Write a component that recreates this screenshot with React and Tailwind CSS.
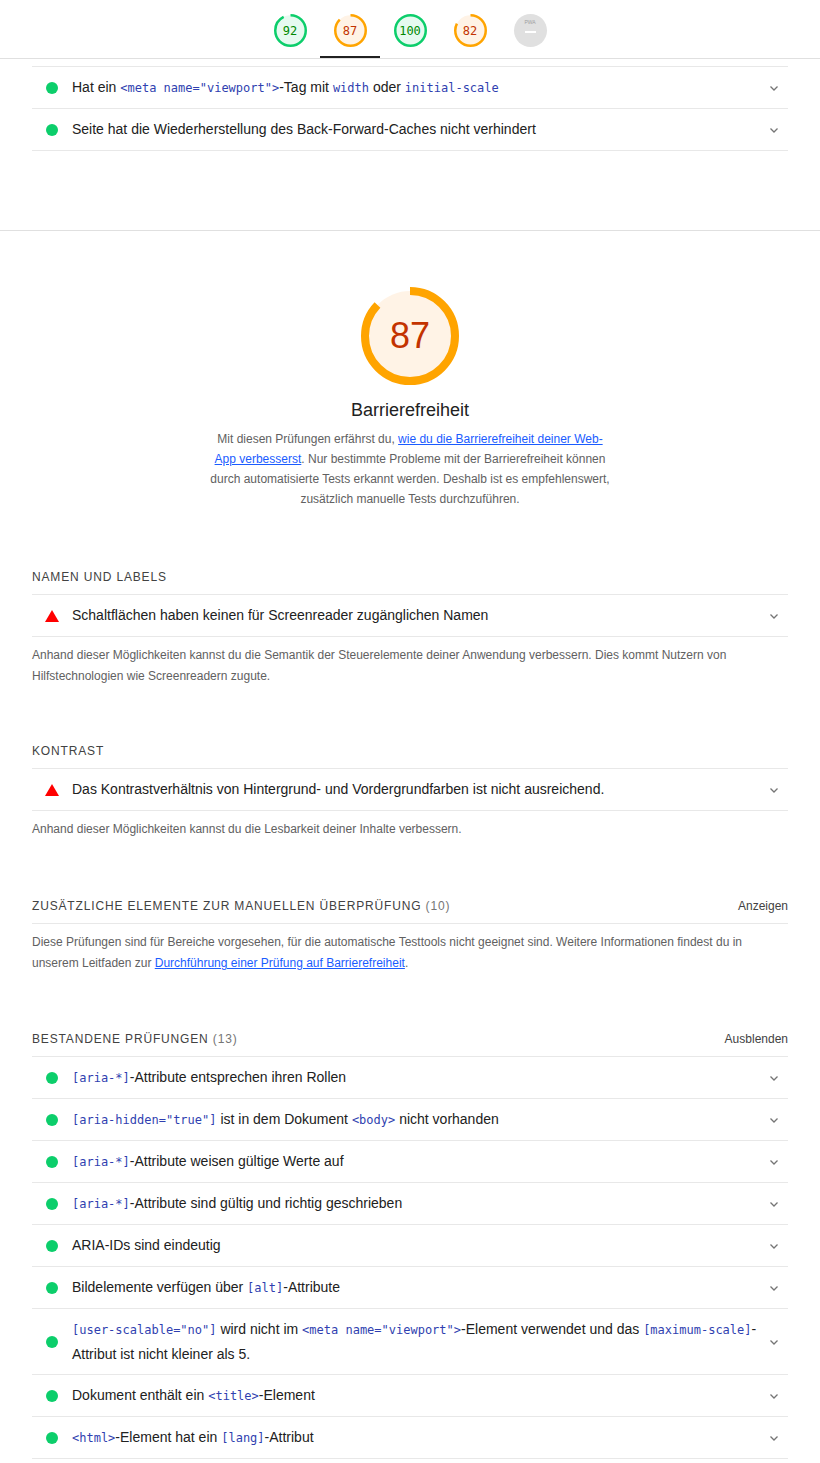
import React from 'react';

const GREEN = '#0cce6b';
const ORANGE = '#ffa400';

const Gauge = ({ score, size, stroke, fontClass }) => {
  const pass = score >= 90;
  const color = pass ? GREEN : ORANGE;
  const fill = pass ? '#e6faf0' : '#fff3e6';
  const textColor = pass ? '#008800' : '#c33300';
  const r = (size - stroke) / 2;
  const c = 2 * Math.PI * r;
  return (
    <div className="relative flex items-center justify-center" style={{ width: size, height: size }}>
      <svg width={size} height={size} className="absolute inset-0">
        <circle cx={size / 2} cy={size / 2} r={r} fill={fill} />
        <circle
          cx={size / 2}
          cy={size / 2}
          r={r}
          fill="none"
          stroke={color}
          strokeWidth={stroke}
          strokeDasharray={`${(c * score) / 100} ${c}`}
          transform={`rotate(-90 ${size / 2} ${size / 2})`}
        />
      </svg>
      <span className={`relative ${fontClass}`} style={{ color: textColor }}>{score}</span>
    </div>
  );
};

const Code = ({ children }) => (
  <code className="font-['DejaVu_Sans_Mono',monospace] text-[12px] text-[#303fb0] whitespace-nowrap">{children}</code>
);

const Chevron = () => (
  <svg width="12" height="12" viewBox="0 0 12 12" className="shrink-0 text-[#757575]">
    <path d="M2.5 4.5 6 8l3.5-3.5" fill="none" stroke="currentColor" strokeWidth="1.3" />
  </svg>
);

const Pass = () => <span className="w-3 h-3 rounded-full bg-[#0cce6b] shrink-0" />;
const Fail = () => (
  <svg width="14" height="12" viewBox="0 0 14 12" className="shrink-0">
    <polygon points="7,0 14,12 0,12" fill="#ff0000" />
  </svg>
);

const Row = ({ icon, children, tall }) => (
  <div className={`flex items-center border-b border-[#e8e8e8] pl-[14px] pr-[8px] ${tall ? 'h-[66px]' : 'h-[42px]'}`}>
    <div className="w-[12px] flex justify-center">{icon}</div>
    <div className={`ml-[14px] mr-[4px] flex-1 text-[14px] text-[#212121] ${tall ? 'leading-[24px]' : ''}`}>{children}</div>
    <Chevron />
  </div>
);

const GroupHead = ({ title, count, action }) => (
  <div className="flex items-end justify-between h-[29px] pb-[11px] border-b border-[#e8e8e8]">
    <div className="text-[12px] uppercase tracking-[0.07em] text-[#424242] leading-none">
      {title}
      {count && <span className="text-[#757575]"> ({count})</span>}
    </div>
    {action && <div className="text-[12px] text-[#424242] leading-none">{action}</div>}
  </div>
);

const GroupDesc = ({ children }) => (
  <p className="text-[12px] leading-[21px] text-[#616161] pt-[8px]">{children}</p>
);

export default function App() {
  return (
    <div className="min-h-screen bg-white font-['Liberation_Sans',Arial,sans-serif]">
      {/* Header gauges */}
      <div className="h-[59px] border-b border-[#e0e0e0] flex justify-center">
        <div className="flex">
          {[92, 87, 100, 82].map((s, i) => (
            <div
              key={i}
              className={`w-[60px] flex justify-center pt-[14px] ${i === 1 ? 'border-b-2 border-[#212121]' : ''}`}
            >
              <Gauge score={s} size={33} stroke={2.5} fontClass="text-[12px] font-['DejaVu_Sans_Mono',monospace]" />
            </div>
          ))}
          <div className="w-[60px] flex justify-center pt-[14px]">
            <div className="w-[33px] h-[33px] rounded-full bg-[#e0e0e0] flex flex-col items-center pt-[6px]">
              <span className="text-[5px] text-[#9e9e9e] leading-none">PWA</span>
              <span className="w-[11px] h-[2px] bg-white mt-[6px]" />
            </div>
          </div>
        </div>
      </div>

      {/* Top rows */}
      <div className="mx-[32px] pt-[7px]">
        <div className="border-t border-[#e8e8e8]">
          <Row icon={<Pass />}>
            Hat ein <Code>&lt;meta name="viewport"&gt;</Code>-Tag mit <Code>width</Code> oder <Code>initial-scale</Code>
          </Row>
          <Row icon={<Pass />}>Seite hat die Wiederherstellung des Back-Forward-Caches nicht verhindert</Row>
        </div>
      </div>

      <div className="h-[80px] border-b border-[#e0e0e0]" />

      {/* Category */}
      <div className="flex flex-col items-center pt-[56px]">
        <Gauge score={87} size={98} stroke={8} fontClass="text-[36px]" />
        <h2 className="mt-[12px] text-[18px] text-[#212121]">Barrierefreiheit</h2>
        <p className="mt-[5px] w-[402px] text-center text-[12px] leading-[20px] text-[#616161]">
          Mit diesen Prüfungen erfährst du,{' '}
          <a href="#" className="text-[#1a5cff] underline">wie du die Barrierefreiheit deiner Web-App verbesserst</a>.
          Nur bestimmte Probleme mit der Barrierefreiheit können durch automatisierte Tests erkannt werden. Deshalb
          ist es empfehlenswert, zusätzlich manuelle Tests durchzuführen.
        </p>
      </div>

      <div className="mx-[32px]">
        <div className="mt-[57px]">
          <GroupHead title="Namen und Labels" />
          <Row icon={<Fail />}>Schaltflächen haben keinen für Screenreader zugänglichen Namen</Row>
          <GroupDesc>
            Anhand dieser Möglichkeiten kannst du die Semantik der Steuerelemente deiner Anwendung verbessern. Dies
            kommt Nutzern von Hilfstechnologien wie Screenreadern zugute.
          </GroupDesc>
        </div>

        <div className="mt-[53px]">
          <GroupHead title="Kontrast" />
          <Row icon={<Fail />}>Das Kontrastverhältnis von Hintergrund- und Vordergrundfarben ist nicht ausreichend.</Row>
          <GroupDesc>Anhand dieser Möglichkeiten kannst du die Lesbarkeit deiner Inhalte verbessern.</GroupDesc>
        </div>

        <div className="mt-[55px]">
          <GroupHead title="Zusätzliche Elemente zur manuellen Überprüfung" count="10" action="Anzeigen" />
          <GroupDesc>
            Diese Prüfungen sind für Bereiche vorgesehen, für die automatische Testtools nicht geeignet sind. Weitere
            Informationen findest du in unserem Leitfaden zur{' '}
            <a href="#" className="text-[#1a5cff] underline">Durchführung einer Prüfung auf Barrierefreiheit</a>.
          </GroupDesc>
        </div>

        <div className="mt-[54px] pb-[4px]">
          <GroupHead title="Bestandene Prüfungen" count="13" action="Ausblenden" />
          <Row icon={<Pass />}><Code>[aria-*]</Code>-Attribute entsprechen ihren Rollen</Row>
          <Row icon={<Pass />}>
            <Code>[aria-hidden="true"]</Code> ist in dem Dokument <Code>&lt;body&gt;</Code> nicht vorhanden
          </Row>
          <Row icon={<Pass />}><Code>[aria-*]</Code>-Attribute weisen gültige Werte auf</Row>
          <Row icon={<Pass />}><Code>[aria-*]</Code>-Attribute sind gültig und richtig geschrieben</Row>
          <Row icon={<Pass />}>ARIA-IDs sind eindeutig</Row>
          <Row icon={<Pass />}>Bildelemente verfügen über <Code>[alt]</Code>-Attribute</Row>
          <Row icon={<Pass />} tall>
            <Code>[user-scalable="no"]</Code> wird nicht im <Code>&lt;meta name="viewport"&gt;</Code>-Element
            verwendet und das <Code>[maximum-scale]</Code>-Attribut ist nicht kleiner als 5.
          </Row>
          <Row icon={<Pass />}>Dokument enthält ein <Code>&lt;title&gt;</Code>-Element</Row>
          <Row icon={<Pass />}><Code>&lt;html&gt;</Code>-Element hat ein <Code>[lang]</Code>-Attribut</Row>
        </div>
      </div>
    </div>
  );
}
